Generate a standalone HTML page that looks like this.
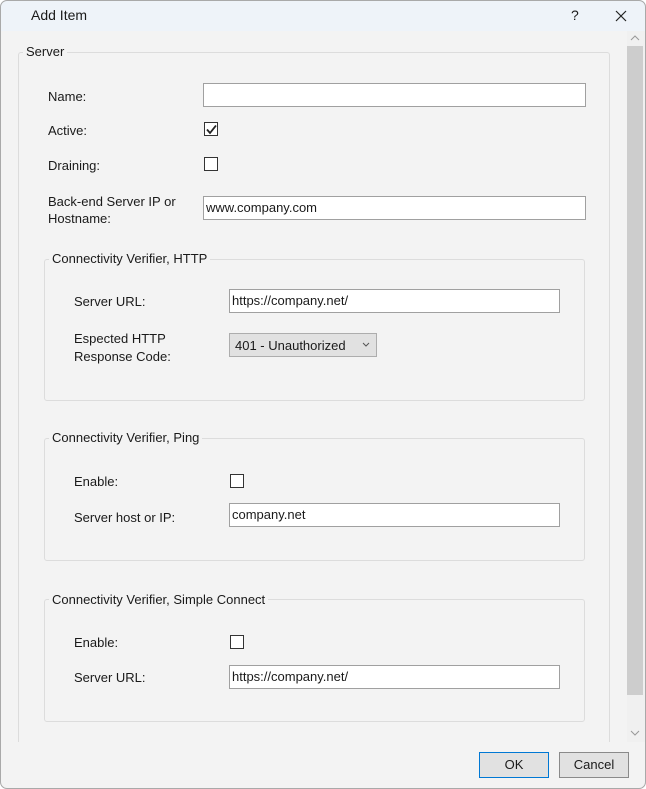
<!DOCTYPE html>
<html><head><style>
*{box-sizing:border-box;margin:0;padding:0}
body{width:646px;height:789px;overflow:hidden;background:#fff;font-family:"Liberation Sans",sans-serif;font-size:13px;color:#1a1a1a;position:relative}
.win{position:absolute;left:0;top:0;width:646px;height:789px;border-radius:7px;background:#f3f3f3;overflow:hidden}
.frame{position:absolute;left:0;top:0;width:646px;height:789px;border:1px solid #a9a9a9;border-radius:7px;pointer-events:none}
.title{position:absolute;left:0;top:0;width:646px;height:31px;background:#eef3f9}
.a{position:absolute;white-space:nowrap}
.gb{position:absolute;border:1px solid #dcdcdc;border-radius:3px}
.gl{position:absolute;background:#f3f3f3;padding:0 3px;white-space:nowrap}
.in{position:absolute;background:#fff;border:1px solid #a0a0a0;height:24px;padding:2px 2px;line-height:18px;font-size:13px;white-space:nowrap}
.cb{position:absolute;width:14px;height:14px;border:1px solid #333;background:#fff}
.btn{position:absolute;height:26px;background:#e1e1e1;border:1px solid #adadad;text-align:center;line-height:24px}
</style></head><body>
<div class="win">
<div class="title"></div>
<div class="a" style="left:31px;top:7px;font-size:14px">Add Item</div>
<div class="a" style="left:571px;top:7px;font-size:14px">?</div>
<svg class="a" style="left:615px;top:10px" width="12" height="12"><path d="M1 1L11 11M11 1L1 11" stroke="#222" stroke-width="1.2"/></svg>

<div class="a" style="left:627px;top:31px;width:19px;height:711px;background:#f0f0f0"></div>
<div class="a" style="left:627px;top:46px;width:16px;height:649px;background:#cdcdcd"></div>
<svg class="a" style="left:630px;top:34px" width="10" height="8"><path d="M1 6L5 2L9 6" stroke="#999" fill="none"/></svg>
<svg class="a" style="left:630px;top:729px" width="10" height="8"><path d="M1 2L5 6L9 2" stroke="#999" fill="none"/></svg>

<div class="gb" style="left:18px;top:52px;width:592px;height:720px"></div>
<div class="gl" style="left:23px;top:44px">Server</div>

<div class="a" style="left:48px;top:89px">Name:</div>
<div class="in" style="left:203px;top:83px;width:383px"></div>
<div class="a" style="left:48px;top:123px">Active:</div>
<div class="cb" style="left:204px;top:122px"></div>
<svg class="a" style="left:206px;top:124px" width="11" height="11"><path d="M1 5.5L4 9L10 1.5" stroke="#222" stroke-width="1.8" fill="none"/></svg>
<div class="a" style="left:48px;top:158px">Draining:</div>
<div class="cb" style="left:204px;top:157px"></div>
<div class="a" style="left:48px;top:193px;line-height:17px">Back-end Server IP or<br>Hostname:</div>
<div class="in" style="left:203px;top:196px;width:383px">www.company.com</div>

<div class="gb" style="left:44px;top:259px;width:541px;height:142px"></div>
<div class="gl" style="left:49px;top:251px">Connectivity Verifier, HTTP</div>
<div class="a" style="left:74px;top:294px">Server URL:</div>
<div class="in" style="left:229px;top:289px;width:331px">https://company.net/</div>
<div class="a" style="left:74px;top:330px;line-height:18px">Espected HTTP<br>Response Code:</div>
<div class="a" style="left:229px;top:333px;width:148px;height:24px;background:#e1e1e1;border:1px solid #adadad;padding:3px 5px;line-height:17px">401 - Unauthorized</div>
<svg class="a" style="left:362px;top:342px" width="8" height="6"><path d="M1 1L4 4L7 1" stroke="#555" fill="none"/></svg>

<div class="gb" style="left:44px;top:438px;width:541px;height:123px"></div>
<div class="gl" style="left:49px;top:430px">Connectivity Verifier, Ping</div>
<div class="a" style="left:74px;top:474px">Enable:</div>
<div class="cb" style="left:230px;top:474px"></div>
<div class="a" style="left:74px;top:510px">Server host or IP:</div>
<div class="in" style="left:229px;top:503px;width:331px">company.net</div>

<div class="gb" style="left:44px;top:599px;width:541px;height:123px"></div>
<div class="gl" style="left:49px;top:592px">Connectivity Verifier, Simple Connect</div>
<div class="a" style="left:74px;top:635px">Enable:</div>
<div class="cb" style="left:230px;top:635px"></div>
<div class="a" style="left:74px;top:670px">Server URL:</div>
<div class="in" style="left:229px;top:665px;width:331px">https://company.net/</div>

<div class="a" style="left:0;top:742px;width:646px;height:47px;background:#f3f3f3"></div>
<div class="btn" style="left:479px;top:752px;width:70px;border-color:#0078d4">OK</div>
<div class="btn" style="left:559px;top:752px;width:70px;border-color:#8a8a8a">Cancel</div>
</div>
<div class="frame"></div>
</body></html>
